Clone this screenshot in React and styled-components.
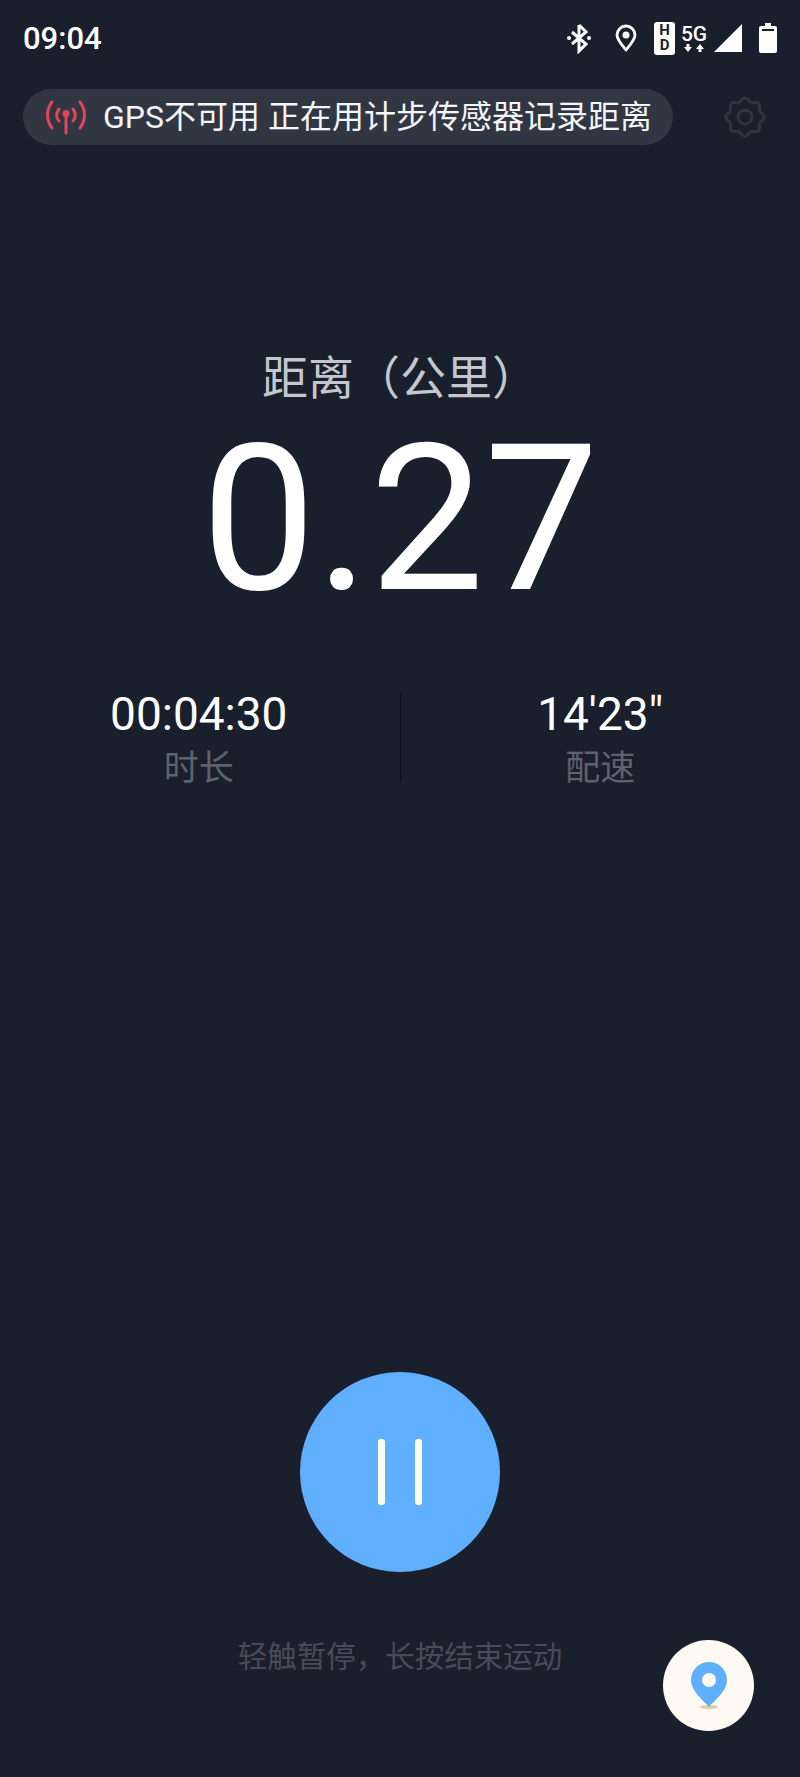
import styled, { createGlobalStyle } from "styled-components";

const GlobalStyle = createGlobalStyle`
  html, body {
    margin: 0;
    padding: 0;
    background: #1a1f2e;
  }
  * {
    box-sizing: border-box;
  }
`;

const FONT = `Roboto, "Noto Sans CJK SC", sans-serif`;

const Page = styled.div`
  position: relative;
  width: 800px;
  height: 1777px;
  overflow: hidden;
  display: flex;
  flex-direction: column;
  background: #1a1f2e;
  color: #fff;
  font-family: ${FONT};
`;

const StatusBar = styled.div`
  display: flex;
  align-items: center;
  justify-content: space-between;
  height: 76px;
  padding: 0 23px 0 23px;
`;

const Clock = styled.div`
  font-size: 31px;
  font-weight: 500;
`;

const StatusIcons = styled.div`
  display: flex;
  align-items: center;
`;

const StatusIcon = styled.svg`
  display: block;
  margin-left: ${(p) => p.$gap || 0}px;
  fill: #fff;
`;

const HdBadge = styled.div`
  width: 21px;
  height: 33px;
  margin-left: 17px;
  border-radius: 3px;
  background: #fff;
  color: #1a1f2e;
  display: flex;
  flex-direction: column;
  align-items: center;
  justify-content: center;
  font-size: 15px;
  font-weight: 700;
  line-height: 15px;
`;

const NetworkStack = styled.div`
  width: 28px;
  margin-left: 5px;
  display: flex;
  flex-direction: column;
  align-items: center;
  font-size: 21px;
  font-weight: 500;
  line-height: 20px;
`;

const GpsRow = styled.div`
  display: flex;
  align-items: center;
  justify-content: space-between;
  height: 56px;
  margin-top: 13px;
  padding: 0 34px 0 23px;
`;

const GpsPill = styled.div`
  width: 650px;
  height: 56px;
  padding-left: 22px;
  border-radius: 28px;
  background: #313643;
  display: flex;
  align-items: center;
`;

const GpsText = styled.span`
  margin-left: 16px;
  font-size: 32px;
  line-height: 56px;
  color: #f4f5f7;
  white-space: nowrap;
`;

const Distance = styled.div`
  margin-top: 210px;
  display: flex;
  flex-direction: column;
  align-items: center;
`;

const DistanceLabel = styled.div`
  font-size: 46px;
  line-height: 46px;
  color: #c4c7cd;
  white-space: nowrap;
`;

const DistanceValue = styled.div`
  margin-top: 15px;
  font-size: 204px;
  font-weight: 400;
  line-height: 208px;
  color: #fff;
`;

const Stats = styled.div`
  margin-top: 63px;
  display: grid;
  grid-template-columns: 1fr 1px 1fr;
  align-items: start;
`;

const Stat = styled.div`
  display: flex;
  flex-direction: column;
  align-items: center;
  padding-right: ${(p) => (p.$left ? 2 : 0)}px;
`;

const StatValue = styled.div`
  font-size: 46px;
  font-weight: 400;
  line-height: 54px;
  color: #fff;
`;

const StatLabel = styled.div`
  margin-top: 5px;
  font-size: 35px;
  line-height: 46px;
  color: #5d626d;
  white-space: nowrap;
`;

const Divider = styled.div`
  margin-top: 5px;
  height: 90px;
  background: #0e111b;
`;

const Controls = styled.div`
  margin-top: auto;
  padding-bottom: 101px;
  display: flex;
  flex-direction: column;
  align-items: center;
`;

const PauseButton = styled.div`
  width: 200px;
  height: 200px;
  border-radius: 50%;
  background: #60afff;
  display: flex;
  align-items: center;
  justify-content: center;
  gap: 30px;
`;

const PauseBar = styled.span`
  width: 7px;
  height: 66px;
  border-radius: 3px;
  background: #fff;
`;

const Hint = styled.div`
  margin-top: 66px;
  font-size: 29.5px;
  line-height: 38px;
  color: #474c59;
`;

const LocationButton = styled.div`
  position: absolute;
  right: 46px;
  bottom: 46px;
  width: 91px;
  height: 91px;
  border-radius: 50%;
  background: #fefaf3;
  display: flex;
  align-items: center;
  justify-content: center;
`;

function BluetoothIcon() {
  return (
    <StatusIcon $gap={0} width="26" height="32" viewBox="0 0 26 32">
      <path
        d="M13 3v26l7-7-14-12M13 3l7 7-14 12"
        fill="none"
        stroke="#fff"
        strokeWidth="3"
      />
      <circle cx="3" cy="16" r="2" />
      <circle cx="23" cy="16" r="2" />
    </StatusIcon>
  );
}

function PinIcon() {
  return (
    <StatusIcon $gap={23} width="22" height="28" viewBox="0 0 22 28">
      <path
        d="M11 26C6 20 2 15.500 2 11a9 9 0 0 1 18 0c0 4.500-4 9-9 15z"
        fill="none"
        stroke="#fff"
        strokeWidth="2.800"
        strokeLinejoin="round"
      />
      <circle cx="11" cy="11" r="3.500" />
    </StatusIcon>
  );
}

function SignalIcon() {
  return (
    <StatusIcon $gap={6} width="28" height="28" viewBox="0 0 28 28">
      <path d="M28 0v28H0z" />
    </StatusIcon>
  );
}

function BatteryIcon() {
  return (
    <StatusIcon $gap={17} width="18" height="30" viewBox="0 0 18 30">
      <path d="M6 0h6v3h4a2 2 0 0 1 2 2v23a2 2 0 0 1-2 2H2a2 2 0 0 1-2-2V5a2 2 0 0 1 2-2h4z" />
      <rect x="3" y="6" width="12" height="2" fill="#1a1f2e" />
    </StatusIcon>
  );
}

function NoSignalIcon() {
  return (
    <svg width="42" height="36" viewBox="0 0 42 36" fill="none" stroke="#e0455a" strokeWidth="3" strokeLinecap="round">
      <path d="M7 3C1 11 1 21 7 29" />
      <path d="M35 3c6 8 6 18 0 26" />
      <path d="M14 10c-3 4-3 9 0 12" />
      <path d="M28 10c3 4 3 9 0 12" />
      <path d="M21 17v17" strokeWidth="3" />
      <circle cx="21" cy="14.500" r="3.500" fill="#e0455a" stroke="none" />
    </svg>
  );
}

// soft eight-lobed outline, same as the settings gear in the app
const gearPoints = Array.from({ length: 96 }, (_, i) => {
  const a = (i / 96) * Math.PI * 2;
  const r = 17.5 + 1.7 * Math.cos(a * 8);
  return `${(21 + r * Math.cos(a)).toFixed(2)},${(21 + r * Math.sin(a)).toFixed(2)}`;
}).join(" ");

function GearIcon() {
  return (
    <svg width="42" height="42" viewBox="0 0 42 42" fill="none" stroke="#30343d" strokeWidth="3">
      <polygon points={gearPoints} />
      <circle cx="21" cy="21" r="7" />
    </svg>
  );
}

function LocationIcon() {
  return (
    <svg width="38" height="48" viewBox="0 0 38 48">
      <ellipse cx="19" cy="45" rx="9" ry="2" fill="#e9c9a6" />
      <path
        d="M19 45C12 37 1 29 1 18a18 18 0 0 1 36 0c0 11-11 19-18 27z"
        fill="#60afff"
      />
      <circle cx="19" cy="18" r="7" fill="#fefaf3" />
    </svg>
  );
}

export default function App() {
  return (
    <Page>
      <GlobalStyle />
      <StatusBar>
        <Clock>09:04</Clock>
        <StatusIcons>
          <BluetoothIcon />
          <PinIcon />
          <HdBadge>
            <span>H</span>
            <span>D</span>
          </HdBadge>
          <NetworkStack>
            <span>5G</span>
            <svg width="20" height="8" viewBox="0 0 20 8" fill="#fff">
              <path d="M4 8L0 3h2.500V0h3v3H8z" />
              <path d="M16 0l4 5h-2.500v3h-3V5H12z" />
            </svg>
          </NetworkStack>
          <SignalIcon />
          <BatteryIcon />
        </StatusIcons>
      </StatusBar>

      <GpsRow>
        <GpsPill>
          <NoSignalIcon />
          <GpsText>GPS不可用 正在用计步传感器记录距离</GpsText>
        </GpsPill>
        <GearIcon />
      </GpsRow>

      <Distance>
        <DistanceLabel>距离（公里）</DistanceLabel>
        <DistanceValue>0.27</DistanceValue>
      </Distance>

      <Stats>
        <Stat $left>
          <StatValue>00:04:30</StatValue>
          <StatLabel>时长</StatLabel>
        </Stat>
        <Divider />
        <Stat>
          <StatValue>14'23"</StatValue>
          <StatLabel>配速</StatLabel>
        </Stat>
      </Stats>

      <Controls>
        <PauseButton>
          <PauseBar />
          <PauseBar />
        </PauseButton>
        <Hint>轻触暂停，长按结束运动</Hint>
      </Controls>

      <LocationButton>
        <LocationIcon />
      </LocationButton>
    </Page>
  );
}
